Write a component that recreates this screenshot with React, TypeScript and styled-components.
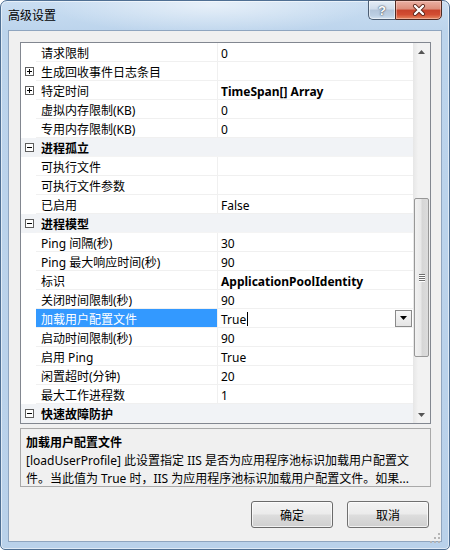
import styled, { createGlobalStyle } from "styled-components";

const GlobalStyle = createGlobalStyle`
  html, body {
    margin: 0;
    padding: 0;
    background: #ffffff;
  }
  body {
    font-family: "Noto Sans", "Noto Sans CJK SC", sans-serif;
    font-size: 12px;
    color: #000000;
  }
`;

type GridRow = {
  label: string;
  value?: string;
  category?: boolean;
  expandable?: boolean;
  boldValue?: boolean;
  selected?: boolean;
};

const rows: GridRow[] = [
  { label: "请求限制", value: "0" },
  { label: "生成回收事件日志条目", value: "", expandable: true },
  { label: "特定时间", value: "TimeSpan[] Array", expandable: true, boldValue: true },
  { label: "虚拟内存限制(KB)", value: "0" },
  { label: "专用内存限制(KB)", value: "0" },
  { label: "进程孤立", category: true },
  { label: "可执行文件", value: "" },
  { label: "可执行文件参数", value: "" },
  { label: "已启用", value: "False" },
  { label: "进程模型", category: true },
  { label: "Ping 间隔(秒)", value: "30" },
  { label: "Ping 最大响应时间(秒)", value: "90" },
  { label: "标识", value: "ApplicationPoolIdentity", boldValue: true },
  { label: "关闭时间限制(秒)", value: "90" },
  { label: "加载用户配置文件", value: "True", selected: true },
  { label: "启动时间限制(秒)", value: "90" },
  { label: "启用 Ping", value: "True" },
  { label: "闲置超时(分钟)", value: "20" },
  { label: "最大工作进程数", value: "1" },
  { label: "快速故障防护", category: true },
];

export default function App() {
  return (
    <>
      <GlobalStyle />
      <Window>
        <TitleBar>
          <Title>高级设置</Title>
          <CaptionButtons>
            <HelpButton>?</HelpButton>
            <CloseButton>
              <svg width="14" height="12" viewBox="0 0 14 12">
                <path d="M3 2 L11 10 M11 2 L3 10" stroke="#5a2418" strokeWidth="4" strokeLinecap="round" />
                <path d="M3 2 L11 10 M11 2 L3 10" stroke="#ffffff" strokeWidth="2.4" strokeLinecap="round" />
              </svg>
            </CloseButton>
          </CaptionButtons>
        </TitleBar>
        <Client>
          <Grid>
            <RowList>
              {rows.map((row) => (
                <PropertyRow key={row.label} row={row} />
              ))}
            </RowList>
            <Scrollbar>
              <ArrowButton>
                <svg width="7" height="4" viewBox="0 0 7 4">
                  <path d="M0 4 L3.5 0 L7 4 Z" fill="#555" />
                </svg>
              </ArrowButton>
              <TrackSpacer />
              <Thumb>
                <Grip>
                  <span />
                  <span />
                  <span />
                  <span />
                </Grip>
              </Thumb>
              <TrackRest />
              <ArrowButton>
                <svg width="7" height="4" viewBox="0 0 7 4">
                  <path d="M0 0 L7 0 L3.5 4 Z" fill="#555" />
                </svg>
              </ArrowButton>
            </Scrollbar>
          </Grid>
          <Description>
            <DescTitle>加载用户配置文件</DescTitle>
            <DescLine>[loadUserProfile] 此设置指定 IIS 是否为应用程序池标识加载用户配置文</DescLine>
            <DescLine>件。当此值为 True 时，IIS 为应用程序池标识加载用户配置文件。如果...</DescLine>
          </Description>
          <ButtonRow>
            <DialogButton $default>确定</DialogButton>
            <DialogButton>取消</DialogButton>
          </ButtonRow>
          <SizeGrip>
            <svg width="10" height="10" viewBox="0 0 10 10">
              <g fill="#b5b5b5">
                <rect x="8" y="0" width="2" height="2" />
                <rect x="4" y="4" width="2" height="2" />
                <rect x="8" y="4" width="2" height="2" />
                <rect x="0" y="8" width="2" height="2" />
                <rect x="4" y="8" width="2" height="2" />
                <rect x="8" y="8" width="2" height="2" />
              </g>
            </svg>
          </SizeGrip>
        </Client>
      </Window>
    </>
  );
}

function PropertyRow({ row }: { row: GridRow }) {
  if (row.category) {
    return (
      <Row $category>
        <MarginCell>
          <ExpandBox open />
        </MarginCell>
        <CategoryLabel>{row.label}</CategoryLabel>
      </Row>
    );
  }
  return (
    <Row>
      <MarginCell>{row.expandable ? <ExpandBox /> : null}</MarginCell>
      <LabelCell $selected={row.selected}>{row.label}</LabelCell>
      <ValueCell $bold={row.boldValue}>
        <ValueText>
          {row.value}
          {row.selected ? <Caret /> : null}
        </ValueText>
        {row.selected ? (
          <DropButton>
            <svg width="7" height="4" viewBox="0 0 7 4">
              <path d="M0 0 L7 0 L3.5 4 Z" fill="#000" />
            </svg>
          </DropButton>
        ) : null}
      </ValueCell>
    </Row>
  );
}

function ExpandBox({ open }: { open?: boolean }) {
  return (
    <svg width="9" height="9" viewBox="0 0 9 9">
      <rect x="0.5" y="0.5" width="8" height="8" fill="#ffffff" stroke="#5e5e5e" />
      <path d="M2 4.5 H7" stroke="#000" />
      {open ? null : <path d="M4.5 2 V7" stroke="#000" />}
    </svg>
  );
}

const Window = styled.div`
  box-sizing: border-box;
  width: 450px;
  height: 550px;
  padding: 0 7px 7px;
  display: flex;
  flex-direction: column;

  border: 1px solid #4f6f93;
  border-radius: 7px 7px 5px 5px;
  background:
    radial-gradient(ellipse 160px 30px at 210px 4px, rgba(255, 255, 255, 0.55), rgba(255, 255, 255, 0)),
    linear-gradient(180deg, #cadef2 0%, #bcd4ec 30px, #b9d1ea 100%);
  box-shadow: inset 0 0 0 1px rgba(255, 255, 255, 0.55);
`;

const TitleBar = styled.div`
  height: 29px;
  display: flex;
  align-items: flex-start;
  flex: none;
`;

const Title = styled.div`
  flex: 1;
  padding-top: 6px;
  line-height: 18px;
  color: #000;
  font-size: 12px;
`;

const CaptionButtons = styled.div`
  display: flex;
  margin-top: -1px;
  height: 20px;
`;

const HelpButton = styled.div`
  box-sizing: border-box;
  width: 27px;
  height: 20px;
  border: 1px solid #4b5d73;
  border-right: none;
  border-radius: 0 0 0 5px;
  background: linear-gradient(180deg, #e4edf6 0%, #cfdcea 45%, #b3c5da 50%, #bccfe3 80%, #d2e1f0 100%);
  box-shadow: inset 0 0 0 1px rgba(255, 255, 255, 0.5);

  display: flex;
  justify-content: center;
  align-items: center;

  font-family: "Liberation Sans", sans-serif;
  font-weight: bold;
  font-size: 13px;
  color: #ffffff;
  text-shadow: 0 0 1px #3b4a5e, 0 0 2px #3b4a5e;
`;

const CloseButton = styled.div`
  box-sizing: border-box;
  width: 47px;
  height: 20px;
  border: 1px solid #4e2a22;
  border-radius: 0 0 5px 0;
  background: linear-gradient(180deg, #eab0a3 0%, #dd8d7a 45%, #c8432b 50%, #d24d32 75%, #e6875f 100%);
  box-shadow: inset 0 0 0 1px rgba(255, 220, 210, 0.45);

  display: flex;
  justify-content: center;
  align-items: center;
`;

const Client = styled.div`
  position: relative;
  flex: 1;
  box-sizing: border-box;
  padding: 11px 11px 0 11px;
  display: flex;
  flex-direction: column;

  background: #f0f0f0;
  border: 1px solid #8fa5bf;
`;

const Grid = styled.div`
  box-sizing: border-box;
  width: 411px;
  height: 382px;
  display: flex;
  flex: none;

  background: #ffffff;
  border: 1px solid #828790;
`;

const RowList = styled.div`
  flex: 1;
  display: flex;
  flex-direction: column;
`;

const Row = styled.div<{ $category?: boolean }>`
  height: 19px;
  display: flex;
  flex: none;
  background: ${(p) => (p.$category ? "#f1f3f6" : "#ffffff")};
`;

const MarginCell = styled.div`
  width: 14px;
  flex: none;
  display: flex;
  align-items: center;
  justify-content: center;
  padding-left: 1px;
`;

const LabelCell = styled.div<{ $selected?: boolean }>`
  box-sizing: border-box;
  width: 181px;
  height: 19px;
  flex: none;
  padding-left: 5px;
  line-height: 22px;
  white-space: nowrap;
  overflow: hidden;

  border-bottom: 1px solid #f0f0f0;
  background: ${(p) => (p.$selected ? "#3399ff" : "transparent")};
  color: ${(p) => (p.$selected ? "#ffffff" : "#000000")};
`;

const CategoryLabel = styled.div`
  box-sizing: border-box;
  flex: 1;
  height: 19px;
  padding-left: 5px;
  line-height: 22px;
  overflow: hidden;
  font-weight: bold;
  border-bottom: 1px solid #f4f4f4;
`;

const ValueCell = styled.div<{ $bold?: boolean }>`
  box-sizing: border-box;
  flex: 1;
  height: 19px;
  display: flex;
  padding-left: 3px;
  overflow: hidden;

  border-left: 1px solid #f0f0f0;
  border-bottom: 1px solid #f0f0f0;
  font-weight: ${(p) => (p.$bold ? "bold" : "normal")};
`;

const ValueText = styled.div`
  flex: 1;
  line-height: 22px;
  white-space: nowrap;
`;

const Caret = styled.span`
  display: inline-block;
  width: 1px;
  height: 14px;
  margin-left: 1px;
  vertical-align: -2px;
  background: #000000;
`;

const DropButton = styled.div`
  box-sizing: border-box;
  width: 17px;
  height: 17px;
  margin-right: 1px;
  align-self: center;
  display: flex;
  align-items: center;
  justify-content: center;

  border: 1px solid #8a8a8a;
  background: linear-gradient(180deg, #f7f7f7, #e4e4e4);
`;

const Scrollbar = styled.div`
  width: 17px;
  flex: none;
  display: flex;
  flex-direction: column;
  background: linear-gradient(90deg, #e6e6e6 0%, #f2f2f2 30%, #f2f2f2 100%);
`;

const ArrowButton = styled.div`
  height: 17px;
  flex: none;
  display: flex;
  align-items: center;
  justify-content: center;
`;

const TrackSpacer = styled.div`
  height: 138px;
  flex: none;
`;

const TrackRest = styled.div`
  flex: 1;
`;

const Thumb = styled.div`
  box-sizing: border-box;
  height: 159px;
  margin: 0 1px;
  flex: none;
  display: flex;
  align-items: center;
  justify-content: center;

  border: 1px solid #979797;
  border-radius: 2px;
  background: linear-gradient(90deg, #f1f1f1 0%, #e8e8e8 45%, #d6d6d6 55%, #dcdcdc 100%);
`;

const Grip = styled.div`
  display: flex;
  flex-direction: column;
  gap: 1px;

  span {
    display: block;
    width: 6px;
    height: 1px;
    background: #6e6e6e;
    box-shadow: 0 1px 0 #ffffff;
  }
`;

const Description = styled.div`
  box-sizing: border-box;
  width: 411px;
  height: 59px;
  margin-top: 4px;
  padding: 5px 5px 0;
  flex: none;
  overflow: hidden;

  border: 1px solid #a9a9a9;
  background: #f0f0f0;
  line-height: 18px;
`;

const DescTitle = styled.div`
  font-weight: bold;
  white-space: nowrap;
`;

const DescLine = styled.div`
  white-space: nowrap;
  overflow: hidden;
`;

const ButtonRow = styled.div`
  width: 411px;
  margin-top: 14px;
  display: flex;
  justify-content: flex-end;
  gap: 14px;
  padding-right: 2px;
  box-sizing: border-box;
`;

const DialogButton = styled.div<{ $default?: boolean }>`
  box-sizing: border-box;
  width: 82px;
  height: 27px;
  display: flex;
  align-items: center;
  justify-content: center;

  border: 1px solid ${(p) => (p.$default ? "#6a6a6a" : "#707070")};
  border-radius: 3px;
  background: linear-gradient(180deg, #f3f3f3 0%, #ebebeb 48%, #dddddd 52%, #cfcfcf 100%);
  box-shadow: inset 0 0 0 1px rgba(255, 255, 255, 0.7);
  font-size: 12px;
  color: #000000;
`;

const SizeGrip = styled.div`
  position: absolute;
  right: 1px;
  bottom: 1px;
  width: 10px;
  height: 10px;
`;
